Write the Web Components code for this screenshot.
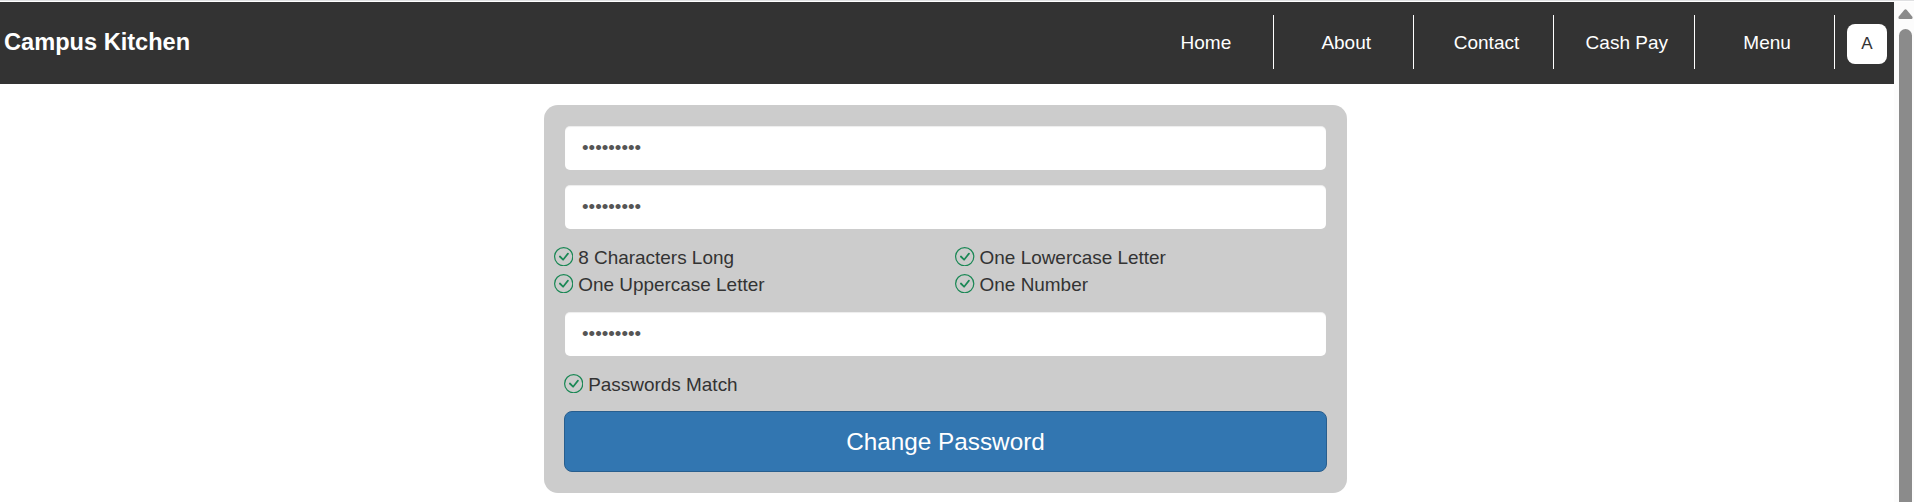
<!DOCTYPE html>
<html lang="en">
<head>
<meta charset="utf-8">
<title>Campus Kitchen</title>
<style>
html,body{margin:0;height:100%;overflow:hidden;background:#fff}
body{font-family:"Liberation Sans",Arial,sans-serif;color:#333}
</style>
</head>
<body>
<ck-app></ck-app>
<script>
const define = (name, html) => {
  const t = document.createElement('template');
  t.innerHTML = html;
  customElements.define(name, class extends HTMLElement {
    constructor() {
      super();
      this.attachShadow({mode: 'open'}).append(t.content.cloneNode(true));
    }
  });
};

define('ck-nav-item', `<style>
:host{display:flex;width:140.3px;height:54px;box-sizing:border-box;border-right:1px solid #fff;align-items:center;justify-content:center;padding:2px 0 0 5.5px;color:#fff;font-size:19px;line-height:22px}
a{color:inherit;text-decoration:none}
</style><a><slot></slot></a>`);

define('ck-avatar', `<style>
:host{display:flex;width:40px;height:40px;border-radius:8px;background:#fff;color:#333;align-items:center;justify-content:center;font-size:17px;line-height:20px}
</style><slot></slot>`);

define('ck-header', `<style>
:host{display:flex;height:82px;background:#333;align-items:center;box-sizing:border-box;padding:0 7px 0 4px}
.brand{flex:1;color:#fff;font-weight:bold;font-size:23.6px;line-height:28px;margin-top:-2px}
nav{display:flex;margin:-2px 12px 0 0}
ck-avatar{margin-top:2px}
</style><div class="brand">Campus Kitchen</div>
<nav><slot></slot></nav><ck-avatar>A</ck-avatar>`);

define('ck-scrollbar', `<style>
:host{display:flex;flex-direction:column;align-items:center;width:20px;box-sizing:border-box;background:#fcfcfc;padding:7px 1px 0 4px}
svg{display:block;width:15px;height:10px;margin-bottom:10px;flex:none}
.thumb{flex:1;width:13px;border-radius:6.5px 6.5px 0 0;background:#8b8b8b}
</style><svg viewBox="0 0 15 10"><path d="M6.2.9Q7.5-.6 8.8.9L14.4 7.8Q15 10 13.3 10H1.7Q0 10 .6 7.8Z" fill="#8b8b8b"/></svg><div class="thumb"></div>`);

define('ck-password', `<style>
:host{display:block;height:44px}
input{display:block;box-sizing:border-box;width:100%;height:44px;border:0;border-radius:5px;background:#fff;box-shadow:inset 0 1px 1px rgba(0,0,0,.075);padding:0 17px;margin:0;font-family:inherit;font-size:18.75px;color:#555;outline:0}
</style><input type="password" value="Kitchen12" aria-label="Password">`);

define('ck-rule', `<style>
:host{display:flex;height:27px;align-items:center;font-size:18.95px;line-height:27px;color:#333}
svg{width:19.4px;height:19.4px;margin:-2px 4.8px 0 0;flex:none;fill:#198754}
</style><svg viewBox="0 0 16 16"><path d="M8 15A7 7 0 1 1 8 1a7 7 0 0 1 0 14m0 1A8 8 0 1 0 8 0a8 8 0 0 0 0 16"/><path d="m10.97 4.97-.02.022-3.473 4.425-2.093-2.094a.75.75 0 0 0-1.06 1.06L6.97 11.03a.75.75 0 0 0 1.079-.02l3.992-4.99a.75.75 0 0 0-1.071-1.05"/></svg><span><slot></slot></span>`);

define('ck-button', `<style>
:host{display:block}
button{display:block;box-sizing:border-box;width:100%;height:61px;border:1px solid #285e8e;border-radius:8px;background:#3276b1;color:#fff;font-family:inherit;font-size:24.3px;line-height:28px;padding:0}
</style><button><slot></slot></button>`);

define('ck-form', `<style>
:host{display:block;width:803px;height:388px;box-sizing:border-box;border-radius:14px;background:#ccc;padding:21px 20px 0}
ck-password{margin:0 1px 15px}
.rules{display:grid;grid-template-columns:401.4px 1fr;margin:0 -10px 14px}
.match{margin-bottom:13px}
</style>
<ck-password></ck-password>
<ck-password></ck-password>
<div class="rules"><ck-rule>8 Characters Long</ck-rule><ck-rule>One Lowercase Letter</ck-rule><ck-rule>One Uppercase Letter</ck-rule><ck-rule>One Number</ck-rule></div>
<ck-password></ck-password>
<ck-rule class="match">Passwords Match</ck-rule>
<ck-button>Change Password</ck-button>`);

define('ck-app', `<style>
:host{display:grid;grid-template-columns:1fr 20px;height:100vh;box-sizing:border-box;border-top:1px solid #dfe0e2;padding-top:1px}
main{display:flex;justify-content:center;padding-top:21px;padding-right:3px}
</style>
<div><ck-header><ck-nav-item>Home</ck-nav-item><ck-nav-item>About</ck-nav-item><ck-nav-item>Contact</ck-nav-item><ck-nav-item>Cash Pay</ck-nav-item><ck-nav-item>Menu</ck-nav-item></ck-header>
<main><ck-form></ck-form></main></div>
<ck-scrollbar></ck-scrollbar>`);
</script>
</body>
</html>
